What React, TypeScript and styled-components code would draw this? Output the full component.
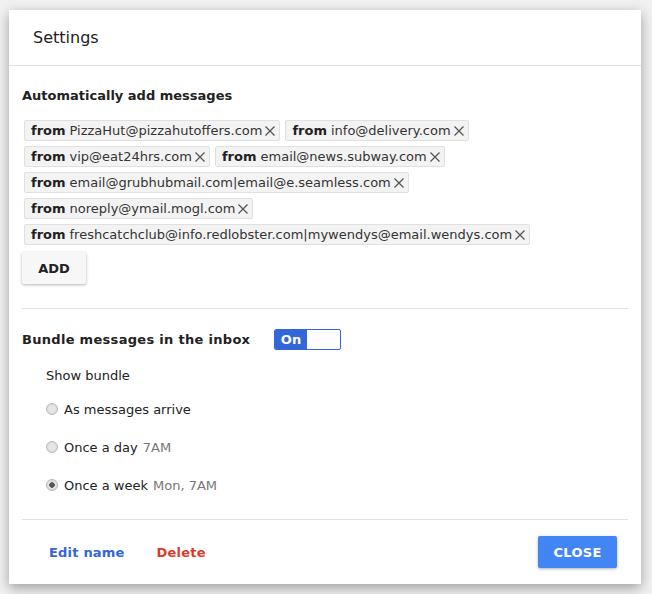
import React, { useState } from "react";
import styled, { createGlobalStyle } from "styled-components";

const GlobalStyle = createGlobalStyle`
  html, body {
    margin: 0;
    padding: 0;
    background: #f1f1f1;
    font-family: "DejaVu Sans", "Liberation Sans", sans-serif;
    color: #222;
  }
`;

const Page = styled.div`
  padding: 10px 11px 10px 9px;
`;

const Dialog = styled.div`
  display: flex;
  flex-direction: column;
  width: 632px;
  height: 574px;
  background: #fff;
  box-shadow: 0 4px 12px rgba(0, 0, 0, 0.35);
  box-sizing: border-box;
`;

const Header = styled.div`
  height: 55px;
  display: flex;
  align-items: center;
  padding-left: 24px;
  font-size: 16px;
  color: #222;
  border-bottom: 1px solid #e2e2e2;
`;

const Body = styled.div`
  flex: 1;
  display: flex;
  flex-direction: column;
  padding: 0 13px;
`;

const Section = styled.div`
  display: flex;
  flex-direction: column;
  padding: ${(p: { $pad: string }) => p.$pad};
  border-bottom: 1px solid #e2e2e2;
`;

const SectionTitle = styled.div`
  font-size: 13px;
  font-weight: bold;
  color: #222;
  line-height: 16px;
`;

const ChipList = styled.div`
  display: flex;
  flex-wrap: wrap;
  gap: 5px 5px;
  margin: 16px 0 0 2px;
`;

const Chip = styled.div`
  display: flex;
  align-items: center;
  height: 21px;
  box-sizing: border-box;
  padding: 0 2px 0 6px;
  background: #f3f3f3;
  border: 1px solid #e0e0e0;
  border-radius: 2px;
  font-size: 13px;
  color: #333;
  white-space: nowrap;
`;

const From = styled.b`
  font-weight: bold;
  color: #222;
  margin-right: 4px;
`;

const Remove = styled.svg`
  width: 14px;
  height: 14px;
  margin-left: 1px;
  flex: none;
`;

const AddButton = styled.button`
  align-self: flex-start;
  margin-top: 7px;
  width: 64px;
  height: 32px;
  border: none;
  border-radius: 2px;
  background: #f7f7f7;
  box-shadow: 0 1px 3px rgba(0, 0, 0, 0.3);
  font-family: inherit;
  font-size: 13px;
  font-weight: bold;
  color: #222;
`;

const BundleRow = styled.div`
  display: flex;
  align-items: center;
`;

const BundleLabel = styled(SectionTitle)`
  width: 252px;
  letter-spacing: 0.3px;
`;

const Toggle = styled.div`
  display: flex;
  width: 67px;
  height: 21px;
  box-sizing: border-box;
  border: 1px solid #3367d6;
  border-radius: 2px;
  overflow: hidden;
`;

const ToggleOn = styled.div`
  width: 32px;
  background: #3367d6;
  color: #fff;
  font-size: 13px;
  font-weight: bold;
  display: flex;
  align-items: center;
  justify-content: center;
`;

const Options = styled.div`
  display: flex;
  flex-direction: column;
  padding-left: 24px;
`;

const ShowLabel = styled.div`
  font-size: 13px;
  color: #222;
  margin: 18px 0 6px;
  line-height: 16px;
`;

const Option = styled.label`
  display: flex;
  align-items: center;
  height: 38px;
  font-size: 13px;
  color: #222;
`;

const Radio = styled.span<{ $checked: boolean }>`
  width: 12px;
  height: 12px;
  box-sizing: border-box;
  border-radius: 50%;
  border: 1px solid #b8b8b8;
  background: radial-gradient(circle, ${(p) => (p.$checked ? "#555 0 2.5px, " : "")}#e6e6e6 3px, #d6d6d6 6px);
  margin-right: 6px;
  flex: none;
`;

const Muted = styled.span`
  color: #777;
  margin-left: 5px;
`;

const Footer = styled.div`
  flex: 1;
  display: flex;
  align-items: center;
  padding: 0 11px 0 27px;
`;

const TextAction = styled.span<{ $color: string }>`
  font-size: 13px;
  font-weight: bold;
  color: ${(p) => p.$color};
  margin-right: 32px;
  letter-spacing: 0.2px;
`;

const CloseButton = styled.button`
  margin-left: auto;
  width: 79px;
  height: 32px;
  border: none;
  border-radius: 2px;
  background: #4285f4;
  box-shadow: 0 1px 3px rgba(0, 0, 0, 0.3);
  color: #fff;
  font-family: inherit;
  font-size: 13px;
  font-weight: bold;
  letter-spacing: 0.3px;
`;

const senders = [
  "PizzaHut@pizzahutoffers.com",
  "info@delivery.com",
  "vip@eat24hrs.com",
  "email@news.subway.com",
  "email@grubhubmail.com|email@e.seamless.com",
  "noreply@ymail.mogl.com",
  "freshcatchclub@info.redlobster.com|mywendys@email.wendys.com",
];

const CloseIcon = () => (
  <Remove viewBox="0 0 14 14">
    <path d="M2.5 2.5l9 9M11.5 2.5l-9 9" stroke="#555" strokeWidth="1.3" fill="none" />
  </Remove>
);

export default function App() {
  const [choice, setChoice] = useState("week");
  const options = [
    { id: "arrive", label: "As messages arrive", note: "" },
    { id: "day", label: "Once a day", note: "7AM" },
    { id: "week", label: "Once a week", note: "Mon, 7AM" },
  ];

  return (
    <Page>
      <GlobalStyle />
      <Dialog>
        <Header>Settings</Header>
        <Body>
          <Section $pad="22px 0 24px">
            <SectionTitle>Automatically add messages</SectionTitle>
            <ChipList>
              {senders.map((s) => (
                <Chip key={s}>
                  <From>from</From>
                  {s}
                  <CloseIcon />
                </Chip>
              ))}
            </ChipList>
            <AddButton>ADD</AddButton>
          </Section>
          <Section $pad="20px 0 15px">
            <BundleRow>
              <BundleLabel>Bundle messages in the inbox</BundleLabel>
              <Toggle>
                <ToggleOn>On</ToggleOn>
              </Toggle>
            </BundleRow>
            <Options>
              <ShowLabel>Show bundle</ShowLabel>
              {options.map((o) => (
                <Option key={o.id} onClick={() => setChoice(o.id)}>
                  <Radio $checked={choice === o.id} />
                  {o.label}
                  {o.note && <Muted>{o.note}</Muted>}
                </Option>
              ))}
            </Options>
          </Section>
          <Footer>
            <TextAction $color="#3367d6">Edit name</TextAction>
            <TextAction $color="#db3a2a">Delete</TextAction>
            <CloseButton>CLOSE</CloseButton>
          </Footer>
        </Body>
      </Dialog>
    </Page>
  );
}
